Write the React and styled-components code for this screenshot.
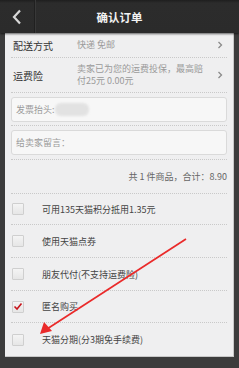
import React from "react";
import styled, { createGlobalStyle } from "styled-components";

const Global = createGlobalStyle`
  html, body {
    margin: 0;
    padding: 0;
    background: #3b3b3b;
  }
  * {
    box-sizing: border-box;
  }
`;

const Page = styled.div`
  position: relative;
  width: 239px;
  height: 368px;
  background: #3c3c3c;
  font-family: "Noto Sans CJK SC", "Noto Sans", sans-serif;
  display: flex;
  flex-direction: column;
  overflow: hidden;
`;

const Header = styled.div`
  height: 33px;
  flex: none;
  display: flex;
  align-items: center;
  background: linear-gradient(#1e1e1e 0, #2c2c2c 3px, #2b2b2b 100%);
  box-shadow: 0 1px 2px rgba(0, 0, 0, 0.6);
  position: relative;
  z-index: 1;
`;

const Back = styled.div`
  width: 35px;
  height: 33px;
  display: flex;
  align-items: center;
  justify-content: center;
  border-right: 1px solid #202020;
  box-shadow: 1px 0 0 #383838;
`;

const Title = styled.div`
  flex: 1;
  text-align: center;
  color: #f2f2f2;
  font-size: 11.5px;
  font-weight: 700;
  padding-right: 35px;
`;

const Panel = styled.div`
  margin: 0 5px 12px 5px;
  flex: 1;
  background: #efeff0;
  border-right: 1px solid #c8c8c8;
  border-bottom: 1px solid #c8c8c8;
  padding: 0 6px;
  display: flex;
  flex-direction: column;
`;

const Row = styled.div`
  height: ${(p) => p.h}px;
  display: flex;
  align-items: center;
  border-bottom: ${(p) => (p.last ? "none" : "1px dotted #c9c9c9")};
  padding-left: ${(p) => p.pl || 0}px;
`;

const Label = styled.div`
  width: 66px;
  padding-left: 2px;
  color: #333;
  font-size: 10px;
  flex: none;
`;

const Value = styled.div`
  flex: 1;
  color: #9a9a9a;
  font-size: 9px;
  line-height: 12px;
`;

const Chevron = styled.div`
  width: 14px;
  display: flex;
  justify-content: center;
  flex: none;
`;

const InputBox = styled.div`
  flex: 1;
  height: 25px;
  border: 1px solid #dadada;
  border-radius: 3px;
  background: #f7f7f7;
  display: flex;
  align-items: center;
  padding-left: 4px;
  color: #9a9a9a;
  font-size: 9px;
`;

const Blur = styled.div`
  width: 34px;
  height: 13px;
  border-radius: 6px;
  background: #e2e2e2;
  filter: blur(1px);
`;

const Total = styled.div`
  flex: 1;
  text-align: right;
  color: #666;
  font-size: 9px;
`;

const Box = styled.div`
  width: 12px;
  height: 12px;
  flex: none;
  border: 1px solid #cfcfcf;
  border-radius: 1px;
  background: linear-gradient(#f4f4f4, #e6e6e6);
  display: flex;
  align-items: center;
  justify-content: center;
  margin-right: 18px;
`;

const Option = styled.div`
  color: #444;
  font-size: 9px;
`;

const Arrow = styled.svg`
  position: absolute;
  left: 0;
  top: 0;
  pointer-events: none;
`;

const options = [
  { text: "可用135天猫积分抵用1.35元", h: 31 },
  { text: "使用天猫点券", h: 33 },
  { text: "朋友代付(不支持运费险)", h: 33 },
  { text: "匿名购买", h: 32, checked: true },
  { text: "天猫分期(分3期免手续费)", h: 33, last: true },
];

const ChevronIcon = () => (
  <svg width="6" height="8" viewBox="0 0 6 8">
    <path d="M1.5 1 L4.5 4 L1.5 7" fill="none" stroke="#8a8a8a" strokeWidth="1.3" />
  </svg>
);

const App = () => {
  return (
    <Page>
      <Global />
      <Header>
        <Back>
          <svg width="10" height="16" viewBox="0 0 10 16">
            <path d="M8 1.5 L2 8 L8 14.5" fill="none" stroke="#d8d8d8" strokeWidth="2.2" />
          </svg>
        </Back>
        <Title>确认订单</Title>
      </Header>
      <Panel>
        <Row h={25}>
          <Label>配送方式</Label>
          <Value>快递 免邮</Value>
          <Chevron>
            <ChevronIcon />
          </Chevron>
        </Row>
        <Row h={35}>
          <Label>运费险</Label>
          <Value>
            卖家已为您的运费投保，最高赔
            <br />
            付25元 0.00元
          </Value>
          <Chevron>
            <ChevronIcon />
          </Chevron>
        </Row>
        <Row h={33}>
          <InputBox>
            发票抬头:
            <Blur />
          </InputBox>
        </Row>
        <Row h={34}>
          <InputBox>给卖家留言：</InputBox>
        </Row>
        <Row h={34}>
          <Total>共 1 件商品，合计：8.90</Total>
        </Row>
        {options.map((o) => (
          <Row key={o.text} h={o.h} last={o.last} pl={1}>
            <Box>
              {o.checked && (
                <svg width="10" height="9" viewBox="0 0 10 9">
                  <path d="M1.5 4.5 L4 7 L8.5 1.5" fill="none" stroke="#c8161d" strokeWidth="1.6" />
                </svg>
              )}
            </Box>
            <Option>{o.text}</Option>
          </Row>
        ))}
      </Panel>
      <Arrow width="239" height="368" viewBox="0 0 239 368">
        <path d="M186 239 L47 329" stroke="#ea2a2a" strokeWidth="1.7" fill="none" />
        <path d="M40 334 L44 322 L52 331 Z" fill="#ea2a2a" />
      </Arrow>
    </Page>
  );
};

export default App;
